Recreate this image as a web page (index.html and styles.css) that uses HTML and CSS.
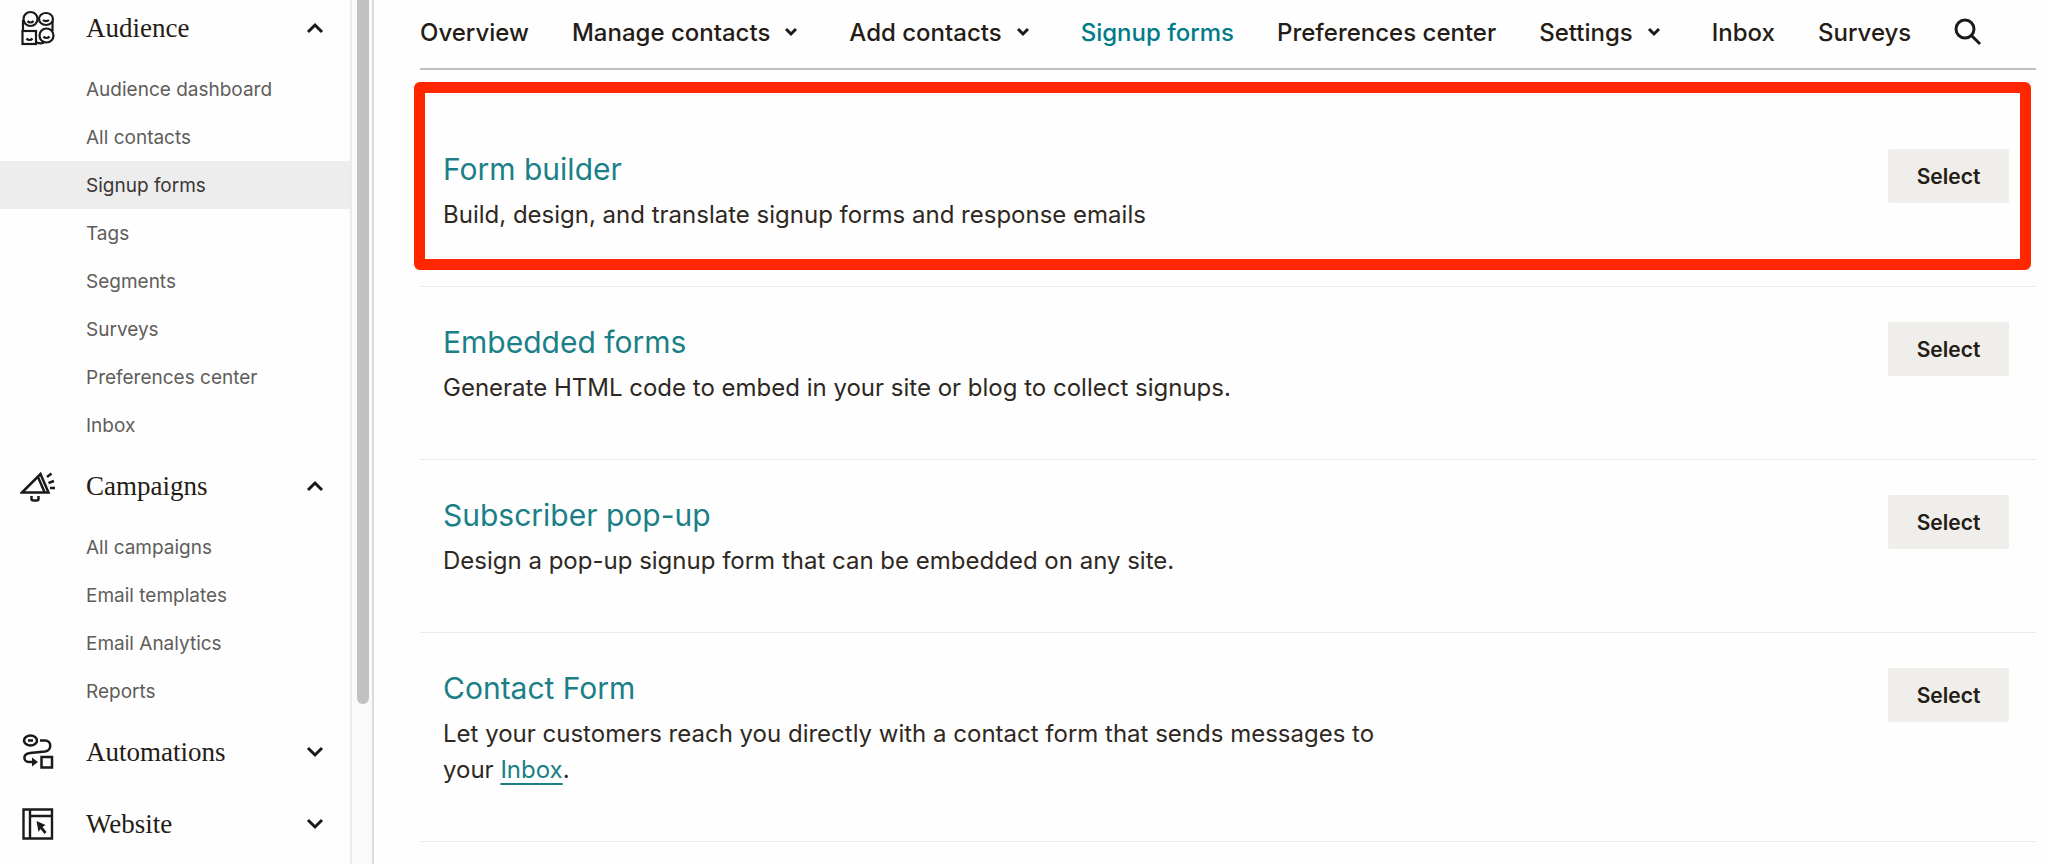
FILE: index.html
```html
<!DOCTYPE html>
<html lang="en">
<head>
<meta charset="utf-8">
<meta name="viewport" content="width=device-width, initial-scale=1">
<title>Signup forms</title>
<link rel="stylesheet" href="styles.css">
</head>
<body>
<div class="app">
  <aside class="sidebar">
    <nav class="side-nav" aria-label="Main">
      <section>
        <button class="group" type="button" aria-expanded="true">
          <svg class="group-icon" viewBox="0 0 36 36" stroke-width="2.2"><circle cx="10.500" cy="9" r="7"/><ellipse cx="26" cy="9" rx="7" ry="6"/><path d="M3 10v11M32.500 11v10M17 32.500c3 1.500 6 1 8-1"/><rect x="2.500" y="21" width="13.500" height="13"/><circle cx="26.500" cy="25.500" r="7"/><path d="M7.500 11c1.500 2 4.500 2 6 0M23 10c1.500 1.500 4.500 1.500 6 0M6.500 28.500c1.500 2 4.500 2 6 0M23.500 26.500c1.500 2 4.500 2 6 0"/></svg>
          <span class="group-name">Audience</span>
          <svg class="chevron" viewBox="0 0 18 12"><path d="M2 10l7-7 7 7"/></svg>
        </button>
        <ul class="links">
          <li><a class="link" href="#">Audience dashboard</a></li>
          <li><a class="link" href="#">All contacts</a></li>
          <li><a class="link active" href="#" aria-current="page">Signup forms</a></li>
          <li><a class="link" href="#">Tags</a></li>
          <li><a class="link" href="#">Segments</a></li>
          <li><a class="link" href="#">Surveys</a></li>
          <li><a class="link" href="#">Preferences center</a></li>
          <li><a class="link" href="#">Inbox</a></li>
        </ul>
      </section>
      <section>
        <button class="group" type="button" aria-expanded="true">
          <svg class="group-icon" viewBox="0 0 36 36" stroke-width="2.5"><path d="M2 24.500L20.500 6l8 18.500zM18 9l6.500 15M11.500 28v3c0 1 1 1.500 2 1.500h3c1 0 2-.5 2-1.500v-3M27 9l4.500-3.500M28.500 15l5.500-2M30 20h5"/></svg>
          <span class="group-name">Campaigns</span>
          <svg class="chevron" viewBox="0 0 18 12"><path d="M2 10l7-7 7 7"/></svg>
        </button>
        <ul class="links">
          <li><a class="link" href="#">All campaigns</a></li>
          <li><a class="link" href="#">Email templates</a></li>
          <li><a class="link" href="#">Email Analytics</a></li>
          <li><a class="link" href="#">Reports</a></li>
        </ul>
      </section>
      <button class="group" type="button" aria-expanded="false">
        <svg class="group-icon" viewBox="0 0 36 36" stroke-width="2.5"><ellipse cx="10.500" cy="6.500" rx="6.500" ry="5"/><path d="M8 6.500h5M20 6.500h5c7 0 7 10 0 11L10 19c-7.500 1-7.500 9 0 9h4"/><path class="solid" d="M12 23.500l6 4.500-6 4.500z"/><rect x="21.500" y="23" width="10.500" height="10.500"/></svg>
        <span class="group-name">Automations</span>
        <svg class="chevron" viewBox="0 0 18 12"><path d="M2 2l7 7 7-7"/></svg>
      </button>
      <button class="group" type="button" aria-expanded="false">
        <svg class="group-icon" viewBox="0 0 36 36" stroke-width="2.4"><path d="M3.500 3.500H32v29H3.500zM10 3.500v29M10 10h22"/><path class="solid" d="M16.500 15l9 4-3 2 4 5-2 2-4-5-2 3z"/></svg>
        <span class="group-name">Website</span>
        <svg class="chevron" viewBox="0 0 18 12"><path d="M2 2l7 7 7-7"/></svg>
      </button>
    </nav>
    <div class="scroll-track"><div class="scroll-thumb"></div></div>
  </aside>
  <main class="content">
    <nav class="tabs" aria-label="Audience">
      <a class="tab" href="#">Overview</a>
      <button class="tab menu" type="button">Manage contacts <svg class="caret" viewBox="0 0 14 10"><path d="M2 2l5 5 5-5"/></svg></button>
      <button class="tab menu" type="button">Add contacts <svg class="caret" viewBox="0 0 14 10"><path d="M2 2l5 5 5-5"/></svg></button>
      <a class="tab current" href="#" aria-current="page">Signup forms</a>
      <a class="tab" href="#">Preferences center</a>
      <button class="tab menu" type="button">Settings <svg class="caret" viewBox="0 0 14 10"><path d="M2 2l5 5 5-5"/></svg></button>
      <a class="tab" href="#">Inbox</a>
      <a class="tab" href="#">Surveys</a>
      <button class="tab" type="button" aria-label="Search"><svg class="search" viewBox="0 0 28 28"><circle cx="11" cy="11" r="9"/><path d="M18 18l8 8"/></svg></button>
    </nav>
    <ul class="forms">
      <li class="form highlighted">
        <div class="about">
          <h2 class="name"><a href="#">Form builder</a></h2>
          <p class="text">Build, design, and translate signup forms and response emails</p>
        </div>
        <button class="select" type="button">Select</button>
      </li>
      <li class="form">
        <div class="about">
          <h2 class="name"><a href="#">Embedded forms</a></h2>
          <p class="text">Generate HTML code to embed in your site or blog to collect signups.</p>
        </div>
        <button class="select" type="button">Select</button>
      </li>
      <li class="form">
        <div class="about">
          <h2 class="name"><a href="#">Subscriber pop-up</a></h2>
          <p class="text">Design a pop-up signup form that can be embedded on any site.</p>
        </div>
        <button class="select" type="button">Select</button>
      </li>
      <li class="form">
        <div class="about">
          <h2 class="name"><a href="#">Contact Form</a></h2>
          <p class="text">Let your customers reach you directly with a contact form that sends messages to your <a class="inline-link" href="#">Inbox</a>.</p>
        </div>
        <button class="select" type="button">Select</button>
      </li>
    </ul>
  </main>
</div>
</body>
</html>
```
FILE: styles.css
```css
* { box-sizing: border-box; }
body {
  margin: 0;
  background: #fefefe;
  color: #241c15;
  font-family: Inter, "Liberation Sans", sans-serif;
  overflow: hidden;
}
a { color: inherit; text-decoration: none; }
button { padding: 0; border: 0; background: none; color: inherit; font: inherit; cursor: pointer; }
ul { margin: 0; padding: 0; list-style: none; }
svg { flex: none; fill: none; stroke: #1c1a19; }

.app { display: flex; height: 100vh; overflow: hidden; }

.sidebar {
  display: flex;
  flex: none;
  width: 374px;
  border-right: 2px solid #dcdcdc;
}
.side-nav { flex: 1; margin-top: -8px; }
.group {
  display: flex;
  align-items: center;
  width: 100%;
  height: 72px;
  padding: 0 26px 0 20px;
  text-align: left;
}
.group-icon { width: 36px; height: 36px; margin-right: 30px; }
.solid { fill: #1c1a19; stroke: none; }
.group-name {
  flex: 1;
  font-family: "Liberation Serif", serif;
  font-size: 27px;
  line-height: 32px;
}
.chevron { width: 18px; height: 12px; stroke-width: 3; }
.links { padding: 1px 0; }
.link {
  display: flex;
  align-items: center;
  height: 48px;
  padding: 1px 0 0 86px;
  color: #605d5b;
  font-size: 19px;
}
.link.active { background: #ededed; color: #3a3634; }
.scroll-track {
  width: 22px;
  padding: 0 3px 0 5px;
  border-left: 2px solid #ebebeb;
  background: #fafafa;
}
.scroll-thumb { width: 12px; height: 704px; border-radius: 0 0 6px 6px; background: #c1c1c1; }

.content { flex: 1; padding: 0 12px 0 46px; }
.tabs {
  display: flex;
  align-items: center;
  gap: 43px;
  height: 70px;
  padding-bottom: 4px;
  border-bottom: 2px solid #c0c0c0;
  font-size: 24px;
  font-weight: 500;
  white-space: nowrap;
}
.current { color: #007c89; }
.menu { display: flex; align-items: center; gap: 14px; padding-right: 8px; }
.caret { width: 14px; height: 10px; stroke-width: 3; }
.search { display: block; width: 28px; height: 28px; stroke-width: 3; }

.forms { padding-top: 44px; }
.form {
  position: relative;
  display: flex;
  align-items: flex-start;
  justify-content: space-between;
  padding: 35px 27px 53px 23px;
  border-bottom: 1px solid #e9e9e9;
}
.highlighted::after {
  content: "";
  position: absolute;
  inset: -32px 5px 16px -6px;
  border: 11px solid #ff2600;
  border-radius: 6px;
  pointer-events: none;
}
.about { max-width: 940px; }
.name { margin: 0 0 8px; color: #1a7f86; font-size: 30px; font-weight: 400; line-height: 40px; }
.text { margin: 0; color: #2e2823; font-size: 24px; line-height: 36px; }
.inline-link {
  color: #1a7f86;
  text-decoration: underline;
  text-decoration-thickness: 2px;
  text-underline-offset: 5px;
}
.select {
  width: 121px;
  height: 54px;
  border-radius: 2px;
  background: #efeeeb;
  font-size: 21px;
  font-weight: 600;
}
```
